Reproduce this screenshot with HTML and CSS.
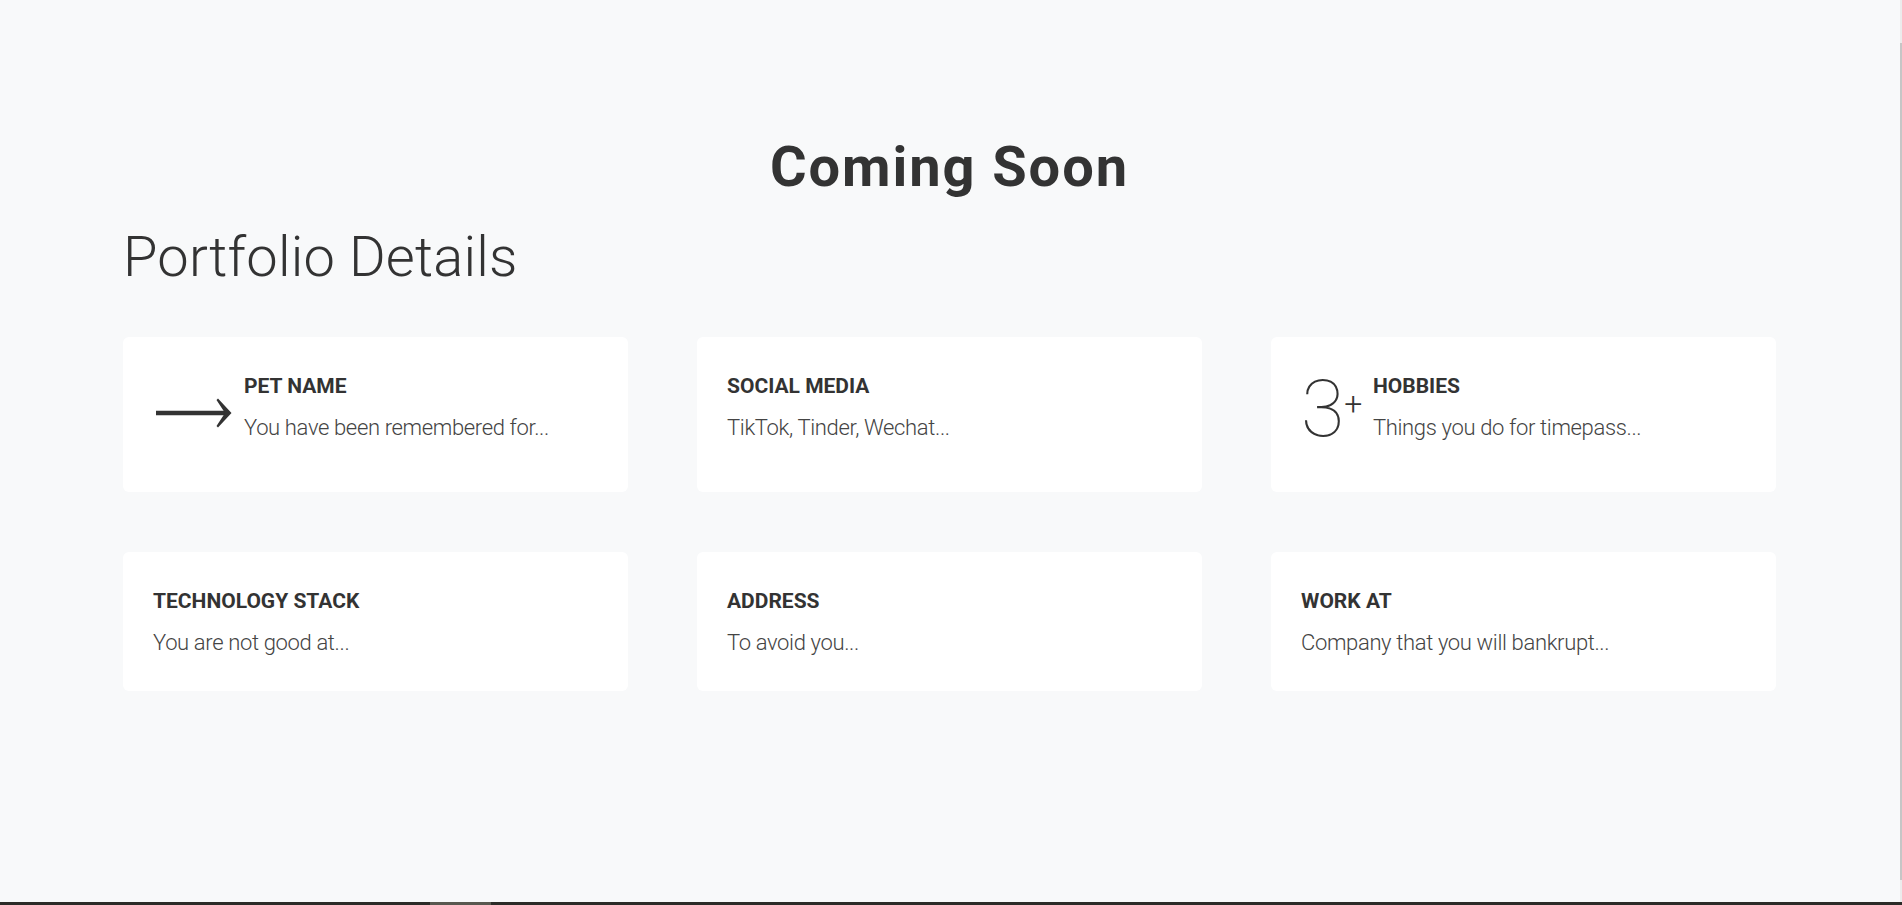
FILE: index.html
```html
<!DOCTYPE html>
<html lang="en">
<head>
<meta charset="utf-8">
<title>Portfolio Details</title>
<link rel="stylesheet" href="styles.css">
</head>
<body>
<main class="page">
  <h1 class="coming">Coming Soon</h1>
  <h2 class="section-title">Portfolio Details</h2>
  <div class="cards">
    <div class="card">
      <div class="card-icon icon-arrow">
        <svg width="78" height="32" viewBox="0 0 78 32" aria-hidden="true">
          <path d="M1 16 H72" stroke="#333" stroke-width="4.5" fill="none"/>
          <path d="M63 1.5 L76.5 16 L63 30.5 L61.5 29 L70 16 L61.5 3 Z" fill="#333"/>
        </svg>
      </div>
      <div class="card-body">
        <h3 class="card-title">PET NAME</h3>
        <p class="card-text">You have been remembered for...</p>
      </div>
    </div>
    <div class="card">
      <div class="card-body">
        <h3 class="card-title">SOCIAL MEDIA</h3>
        <p class="card-text">TikTok, Tinder, Wechat...</p>
      </div>
    </div>
    <div class="card">
      <div class="card-icon icon-count"><span class="count">3</span><sup class="plus">+</sup></div>
      <div class="card-body">
        <h3 class="card-title">HOBBIES</h3>
        <p class="card-text">Things you do for timepass...</p>
      </div>
    </div>
    <div class="card">
      <div class="card-body">
        <h3 class="card-title">TECHNOLOGY STACK</h3>
        <p class="card-text">You are not good at...</p>
      </div>
    </div>
    <div class="card">
      <div class="card-body">
        <h3 class="card-title">ADDRESS</h3>
        <p class="card-text">To avoid you...</p>
      </div>
    </div>
    <div class="card">
      <div class="card-body">
        <h3 class="card-title">WORK AT</h3>
        <p class="card-text">Company that you will bankrupt...</p>
      </div>
    </div>
  </div>
</main>
<div class="vscroll" aria-hidden="true"><div class="vthumb"></div></div>
<div class="hscroll" aria-hidden="true"><div class="hthumb"></div></div>
</body>
</html>
```

FILE: styles.css
```css
* { box-sizing: border-box; }

html, body {
  margin: 0;
  padding: 0;
  background: #f8f9fa;
  height: 100%;
  overflow: hidden;
}

body {
  font-family: Roboto, "Liberation Sans", sans-serif;
  color: #333;
}

.page {
  margin-right: 3px;
  padding: 134px 123px 0;
}

.coming {
  margin: 0;
  font-size: 56px;
  line-height: 1.2;
  font-weight: 700;
  letter-spacing: 1.9px;
  text-align: center;
  color: #333;
}

.section-title {
  margin: 23px 0 0;
  font-size: 56px;
  line-height: 1.2;
  font-weight: 300;
  letter-spacing: 0.2px;
  color: #333;
}

.cards {
  margin-top: 46px;
  display: grid;
  grid-template-columns: repeat(3, 1fr);
  column-gap: 69px;
  row-gap: 60px;
}

.card {
  background: #fff;
  border-radius: 6px;
  padding: 37px 30px 33px;
  display: flex;
  align-items: flex-start;
}

.card-icon {
  height: 85px;
  flex: none;
}

.icon-arrow {
  width: 91px;
  padding-top: 23px;
  padding-left: 2px;
}

.icon-arrow svg { display: block; }

.icon-count {
  width: 72px;
  display: flex;
  align-items: flex-start;
}

.count {
  font-size: 79px;
  line-height: 71px;
  font-weight: 100;
  color: #333;
}

.plus {
  font-size: 32px;
  line-height: 1;
  font-weight: 300;
  margin-top: 14px;
  margin-left: 0;
  vertical-align: top;
}

.card-title {
  margin: 0;
  font-size: 21px;
  line-height: 25px;
  font-weight: 700;
  letter-spacing: 0;
  color: #333;
}

.card-text {
  margin: 14px 0 0;
  font-size: 22px;
  line-height: 30px;
  font-weight: 300;
  letter-spacing: -0.35px;
  color: #444;
}

.vscroll {
  position: fixed;
  top: 0;
  right: 0;
  width: 2px;
  height: 902px;
  background: #ececec;
}

.vthumb {
  margin-top: 43px;
  height: 837px;
  background: #c6c6c6;
}

.hscroll {
  position: fixed;
  left: 0;
  bottom: 0;
  width: 100%;
  height: 3px;
  background: #2b2b27;
}

.hthumb {
  margin-left: 430px;
  width: 61px;
  height: 3px;
  background: #58584f;
}
```
